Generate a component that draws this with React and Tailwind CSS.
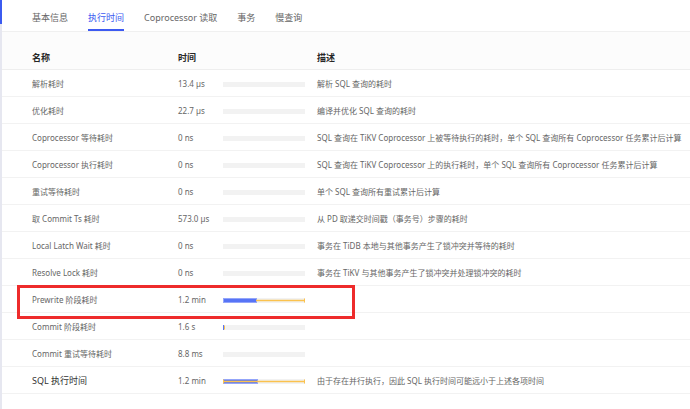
const rows = [
  { name: "解析耗时", time: "13.4 µs", desc: "解析 SQL 查询的耗时" },
  { name: "优化耗时", time: "22.7 µs", desc: "编译并优化 SQL 查询的耗时" },
  {
    name: "Coprocessor 等待耗时",
    time: "0 ns",
    desc: "SQL 查询在 TiKV Coprocessor 上被等待执行的耗时，单个 SQL 查询所有 Coprocessor 任务累计后计算",
  },
  {
    name: "Coprocessor 执行耗时",
    time: "0 ns",
    desc: "SQL 查询在 TiKV Coprocessor 上的执行耗时，单个 SQL 查询所有 Coprocessor 任务累计后计算",
  },
  { name: "重试等待耗时", time: "0 ns", desc: "单个 SQL 查询所有重试累计后计算" },
  { name: "取 Commit Ts 耗时", time: "573.0 µs", desc: "从 PD 取递交时间戳（事务号）步骤的耗时" },
  { name: "Local Latch Wait 耗时", time: "0 ns", desc: "事务在 TiDB 本地与其他事务产生了锁冲突并等待的耗时" },
  { name: "Resolve Lock 耗时", time: "0 ns", desc: "事务在 TiKV 与其他事务产生了锁冲突并处理锁冲突的耗时" },
  { name: "Prewrite 阶段耗时", time: "1.2 min", desc: "", bar: "prewrite" },
  { name: "Commit 阶段耗时", time: "1.6 s", desc: "", bar: "commit" },
  { name: "Commit 重试等待耗时", time: "8.8 ms", desc: "" },
  {
    name: "SQL 执行时间",
    time: "1.2 min",
    desc: "由于存在并行执行，因此 SQL 执行时间可能远小于上述各项时间",
    bar: "total",
    strong: true,
  },
];

const tabs = ["基本信息", "执行时间", "Coprocessor 读取", "事务", "慢查询"];

function Bar({ kind }) {
  return (
    <svg width="82" height="7" viewBox="0 0 82 7" className="block">
      <rect x="0" y="1" width="82" height="5" fill="#f2f2f2" />
      {kind === "prewrite" && (
        <>
          <rect x="0.5" y="1.5" width="33" height="4" fill="#5774f6" stroke="#93a5fa" />
          <line x1="33" y1="3.5" x2="81.5" y2="3.5" stroke="#fbc24e" strokeWidth="1.5" />
          <line x1="81.5" y1="1.5" x2="81.5" y2="5.5" stroke="#fbc24e" strokeWidth="1" />
        </>
      )}
      {kind === "commit" && (
        <>
          <rect x="0" y="1" width="1" height="5" fill="#5774f6" />
          <line x1="1.5" y1="1.5" x2="1.5" y2="5.5" stroke="#fbc24e" strokeWidth="1" />
        </>
      )}
      {kind === "total" && (
        <>
          <rect x="0.5" y="1.5" width="34" height="4" fill="#5774f6" stroke="#93a5fa" />
          <line x1="0.5" y1="3.5" x2="81.5" y2="3.5" stroke="#fbc24e" strokeWidth="1.5" />
          <line x1="0.5" y1="1.5" x2="0.5" y2="5.5" stroke="#fbc24e" strokeWidth="1" />
          <line x1="81.5" y1="1.5" x2="81.5" y2="5.5" stroke="#fbc24e" strokeWidth="1" />
        </>
      )}
    </svg>
  );
}

export default function App() {
  return (
    <div
      className="w-[690px] h-[409px] bg-white flex overflow-hidden relative"
      style={{ fontFamily: '"Noto Sans", "Noto Sans CJK SC", sans-serif' }}
    >
      {/* left rail */}
      <div className="w-[2px] flex flex-col shrink-0">
        <div className="h-[24px] bg-[#3b5bf0]" />
        <div className="flex-1 bg-[#e6e7f0]" />
      </div>

      <div className="flex-1 flex flex-col">
        {/* Tabs */}
        <div className="h-[32px] flex items-stretch gap-[20px] pl-[30px] border-b border-[#f0f0f0]">
          {tabs.map((t, i) => (
            <div
              key={t}
              className={
                "flex items-center text-[9px] leading-none pt-[5px] border-b-2 " +
                (i === 1 ? "text-[#3d5af1] border-[#3d5af1]" : "text-[#666] border-transparent")
              }
            >
              {t}
            </div>
          ))}
        </div>

        {/* Header */}
        <div className="h-[38px] flex items-center bg-[#fcfcfc] border-b border-[#eeeeee] text-[9px] font-bold text-[#262626] pt-[14px]">
          <div className="w-[176px] pl-[30px]">名称</div>
          <div className="w-[139px]">时间</div>
          <div>描述</div>
        </div>

        {/* Rows */}
        {rows.map((r) => (
          <div
            key={r.name}
            className="h-[27px] flex items-center border-b border-[#f2f2f2] text-[8px] text-[#666] shrink-0 pt-[2px]"
          >
            <div
              className={
                "w-[176px] pl-[30px] " + (r.strong ? "text-[9px] text-[#333]" : "")
              }
            >
              {r.name}
            </div>
            <div className="w-[45px]">{r.time}</div>
            <div className="w-[94px]">
              <Bar kind={r.bar} />
            </div>
            <div className="whitespace-nowrap">{r.desc}</div>
          </div>
        ))}
      </div>

      {/* annotation box */}
      <div className="absolute left-[17px] top-[285px] w-[338px] h-[34px] border-[3px] border-[#ee2b2b]" />
    </div>
  );
}
